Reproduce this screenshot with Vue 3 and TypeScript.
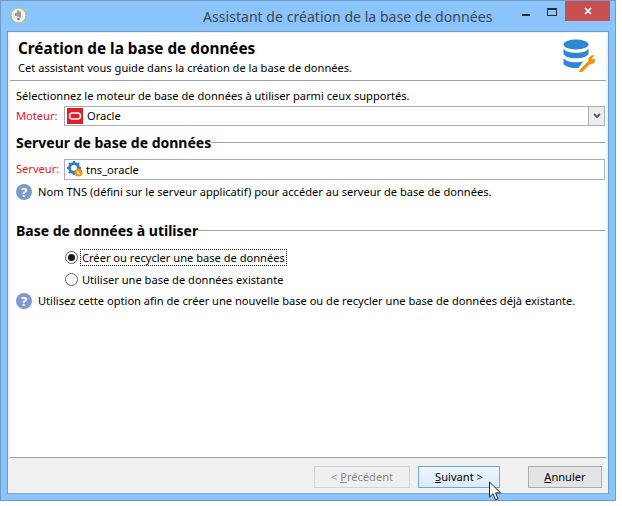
<script setup lang="ts">
const engine = 'Oracle'
</script>

<template>
  <div class="window">
    <div class="titlebar">
      <svg class="app-icon" width="17" height="17" viewBox="0 0 17 17">
        <circle cx="8.500" cy="8.500" r="7.500" fill="#eef0e6" stroke="#a3c46c" />
        <path d="M8 3.500v6M10 4.500v6M6 6v3" stroke="#6c6c66" stroke-width="1.300" fill="none" />
        <circle cx="8.500" cy="12" r="1.300" fill="#7a7a72" />
      </svg>
      <span class="title">Assistant de création de la base de données</span>
      <div class="controls">
        <svg class="min" width="8" height="2"><rect width="8" height="2" fill="#2b2b2b" /></svg>
        <svg class="max" width="11" height="9"><rect x="0.500" y="0.500" width="9" height="7" fill="none" stroke="#2b2b2b" /><rect x="0" y="0" width="10" height="2" fill="#2b2b2b" /></svg>
        <div class="close">
          <svg width="8" height="8" viewBox="0 0 8 8"><path d="M1 1l6 6M7 1l-6 6" stroke="#fff" stroke-width="1.700" /></svg>
        </div>
      </div>
    </div>
    <div class="client">
      <div class="page">
        <header class="head">
          <div>
            <h1>Création de la base de données</h1>
            <p>Cet assistant vous guide dans la création de la base de données.</p>
          </div>
          <svg class="db" width="32" height="33" viewBox="0 0 32 33">
            <ellipse cx="13" cy="5.500" rx="12.500" ry="5" fill="#2f86d2" />
            <path d="M0.500 9.500c2 3 6.500 4.300 12.500 4.300s10.500-1.300 12.500-4.300v5.500c-2 3-6.500 4.300-12.500 4.300S2.500 18 0.500 15z" fill="#2f86d2" />
            <path d="M0.500 19c2 3 6.500 4.300 12.500 4.300 3 0 5.200-.3 7.200-1l-4.500 6.500c-.8.100-1.700.200-2.700.200-6 0-10.500-1.500-12.500-4z" fill="#2f86d2" />
            <path d="M17 31l9-9c-.8-2.500 1-5.500 4.800-5.300l-2.300 2.600 1 1.700 2.400-.7c.2 3.300-2.700 5.300-5.200 4.500l-8 8.200h-2z" fill="#f0920e" stroke="#f0920e" stroke-width="1" />
          </svg>
        </header>
        <main class="body">
          <p class="intro">Sélectionnez le moteur de base de données à utiliser parmi ceux supportés.</p>
          <div class="field">
            <label>Moteur:</label>
            <div class="input">
              <svg width="16" height="16" viewBox="0 0 16 16"><rect width="16" height="16" fill="#e01f26" /><rect x="2.500" y="5" width="11" height="6" rx="3" fill="none" stroke="#fff" stroke-width="1.500" /></svg>
              <span class="oracle">{{ engine }}</span>
              <div class="arrow">
                <svg width="8" height="6" viewBox="0 0 8 6"><path d="M1 1l3 3 3-3" fill="none" stroke="#555" stroke-width="1.800" /></svg>
              </div>
            </div>
          </div>
          <div class="section first"><h2>Serveur de base de données</h2><i></i></div>
          <div class="field server">
            <label>Serveur:</label>
            <div class="input">
              <svg width="16" height="16" viewBox="0 0 16 16">
                <circle cx="7" cy="7" r="4.500" fill="none" stroke="#2c7fc9" stroke-width="3" />
                <path d="M7 0v3M7 11v3M0 7h3M11 7h3M2 2l2 2M10 10l2 2M12 2l-2 2M2 12l2-2" stroke="#2c7fc9" stroke-width="2" />
                <circle cx="11.500" cy="11.500" r="4" fill="#f0920e" />
                <path d="M10 11l3 2M11 9.500v4" stroke="#fff" stroke-width="1" />
              </svg>
              <span class="tns">tns_oracle</span>
            </div>
          </div>
          <div class="help">
            <span class="q">?</span>
            <span>Nom TNS (défini sur le serveur applicatif) pour accéder au serveur de base de données.</span>
          </div>
          <div class="section second"><h2>Base de données à utiliser</h2><i></i></div>
          <div class="options">
            <div class="radio-row">
              <span class="radio on"></span>
              <span class="focus">Créer ou recycler une base de données</span>
            </div>
            <div class="radio-row">
              <span class="radio"></span>
              <span class="plain">Utiliser une base de données existante</span>
            </div>
          </div>
          <div class="help">
            <span class="q">?</span>
            <span>Utilisez cette option afin de créer une nouvelle base ou de recycler une base de données déjà existante.</span>
          </div>
        </main>
      </div>
      <footer class="foot">
        <button class="btn disabled">&lt; <u>P</u>récédent</button>
        <button class="btn primary"><u>S</u>uivant &gt;</button>
        <button class="btn cancel"><u>A</u>nnuler</button>
        <svg class="cursor" width="14" height="20" viewBox="0 0 14 20">
          <path d="M1.500 1v15l3.500-3.300 2.500 6 2.500-1-2.500-5.800h5z" fill="#fff" stroke="#222" stroke-width="1" />
        </svg>
      </footer>
    </div>
  </div>
</template>

<style>
html, body { margin: 0; background: #fff; }
</style>

<style scoped>
.window {
  position: relative;
  box-sizing: border-box;
  width: 616px;
  height: 501px;
  background: #8ac4fa;
  border: 1px solid #6d9dc6;
  font-family: "Noto Sans", "Open Sans", sans-serif;
  font-size: 11.100px;
  color: #000;
  display: flex;
  flex-direction: column;
  padding: 0 6px 6px;
}
.titlebar {
  height: 30px;
  flex: none;
  display: flex;
  align-items: center;
  position: relative;
}
.app-icon { margin: -1px 0 0 3px; }
.title {
  margin-left: 176px;
  margin-top: 1px;
  font-size: 14.100px;
  color: #3a4756;
  white-space: nowrap;
}
.controls {
  position: absolute;
  right: -1px;
  top: 0;
  display: flex;
  align-items: flex-start;
}
.min { margin-top: 13px; }
.max { margin: 7px 0 0 17px; }
.close {
  width: 45px;
  height: 20px;
  margin-left: 7px;
  background: #c75050;
  display: flex;
  align-items: center;
  justify-content: center;
}
.client {
  flex: 1;
  display: flex;
  flex-direction: column;
  background: #f0f0f0;
  border: 1px solid #6d9dc6;
  border-bottom-color: #7aa7cf;
  padding: 1px 2px 0;
  min-height: 0;
}
.page {
  flex: 1;
  background: #fff;
  display: flex;
  flex-direction: column;
  border-bottom: 1px solid #a0a0a0;
}
.head {
  height: 47px;
  display: flex;
  justify-content: space-between;
  padding: 0 11px 0 8px;
  border-bottom: 1px solid #a0a0a0;
}
h1 {
  margin: 5px 0 0;
  font-size: 15.300px;
  line-height: 20px;
  font-weight: 700;
}
.head p {
  margin: 1px 0 0;
  line-height: 17px;
}
.db { margin-top: 6px; }
.body { padding: 0 1px 0 6px; }
.intro {
  margin: 0;
  padding-top: 6px;
  line-height: 17px;
}
.field {
  display: flex;
  align-items: center;
  margin-top: 2px;
}
.field.server { margin-top: 6px; }
.field label {
  width: 48px;
  color: #f0141e;
  margin-top: -2px;
}
.input {
  position: relative;
  flex: 1;
  height: 20px;
  box-sizing: border-box;
  border: 1px solid #abadb3;
  background: #fff;
  display: flex;
  align-items: center;
  padding: 0 0 1px 2px;
}
.server .input { height: 21px; }
.oracle { margin-left: 4px; }
.tns { margin-left: 3px; }
.arrow {
  position: absolute;
  right: 0;
  top: 0;
  bottom: 0;
  width: 15px;
  background: #ececec;
  border-left: 1px solid #abadb3;
  display: flex;
  align-items: center;
  justify-content: center;
}
.section {
  display: flex;
  align-items: center;
}
.section h2 {
  margin: 0;
  font-size: 14px;
  font-weight: 700;
  white-space: nowrap;
  line-height: 20px;
}
.section i {
  flex: 1;
  height: 1px;
  background: #a0a0a0;
  margin-top: -1px;
}
.section.first { margin-top: 7px; }
.section.second { margin-top: 21px; }
.server + .help { margin-top: 3px; }
.help {
  display: flex;
  align-items: center;
  gap: 6px;
  line-height: 17px;
}
.q {
  width: 16px;
  height: 16px;
  border-radius: 50%;
  background: #7d9bc8;
  color: #fff;
  font-weight: 700;
  font-size: 13px;
  line-height: 16px;
  text-align: center;
  flex: none;
}
.options {
  padding-left: 49px;
  margin-top: 5px;
  margin-bottom: 1px;
}
.radio-row {
  display: flex;
  align-items: center;
  height: 23px;
}
.radio-row + .radio-row { margin-top: -1px; }
.radio {
  box-sizing: border-box;
  width: 13px;
  height: 13px;
  border-radius: 50%;
  border: 1px solid #5e5e5e;
  background: #fff;
  margin-right: 2px;
  position: relative;
  flex: none;
}
.radio.on::after {
  content: "";
  position: absolute;
  left: 2px;
  top: 2px;
  width: 7px;
  height: 7px;
  border-radius: 50%;
  background: #1a1a1a;
}
.focus {
  border: 1px dotted #222;
  line-height: 15px;
  padding: 0 1px;
}
.plain { margin-left: 2px; }
.foot {
  box-sizing: border-box;
  height: 35px;
  flex: none;
  position: relative;
  display: flex;
  align-items: flex-start;
  padding: 8px 0 0 306px;
  margin: 0 -2px;
}
.btn {
  box-sizing: border-box;
  height: 22px;
  padding: 0;
  border: 1px solid #acacac;
  background: #e4e4e4;
  font: inherit;
  color: #000;
  text-align: center;
  line-height: 18px;
}
.disabled {
  width: 96px;
  background: #efefef;
  border-color: #d4d4d4;
  color: #8a8a8a;
}
.primary {
  width: 82px;
  margin-left: 8px;
  background: linear-gradient(#edf5fc, #dcebfa);
  border-color: #6fa6dc;
}
.cancel {
  width: 74px;
  margin-left: 28px;
}
.cursor {
  position: absolute;
  left: 480px;
  top: 23px;
}
</style>
